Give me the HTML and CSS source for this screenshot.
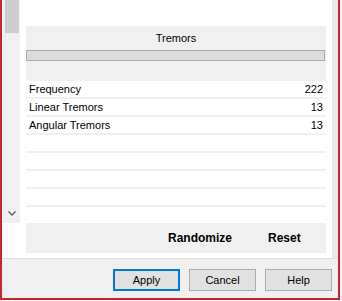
FILE: index.html
```html
<!DOCTYPE html>
<html lang="en">
<head>
  <meta charset="UTF-8">
  <title>Tremors</title>
  <link rel="stylesheet" href="styles.css">
</head>
<body>
  <div class="window">
    <div class="content">
      <div class="scrollbar">
        <div class="track">
          <div class="thumb"></div>
          <svg class="arrow" width="8" height="5" viewBox="0 0 8 5"><polyline points="0.5,0.5 4,4 7.5,0.5" fill="none" stroke="#606060" stroke-width="1.4"/></svg>
        </div>
      </div>
      <div class="pane">
        <div class="panel">
          <div class="panel-head">
            <div class="title">Tremors</div>
            <div class="meter"></div>
          </div>
          <div class="rows">
            <div class="row"><span>Frequency</span><span>222</span></div>
            <div class="row"><span>Linear Tremors</span><span>13</span></div>
            <div class="row"><span>Angular Tremors</span><span>13</span></div>
            <div class="row"></div>
            <div class="row"></div>
            <div class="row"></div>
            <div class="row"></div>
            <div class="row"></div>
          </div>
          <div class="actions">
            <span>Randomize</span>
            <span>Reset</span>
          </div>
        </div>
      </div>
      <div class="edge"></div>
    </div>
    <div class="footer">
      <button class="btn default">Apply</button>
      <button class="btn">Cancel</button>
      <button class="btn">Help</button>
    </div>
  </div>
</body>
</html>
```

FILE: styles.css
```css
:root {
  --frame-red: #c3282f;
  --face: #f0f0f0;
  --text: #000;
}
body {
  margin: 0;
  background: #f4f4f4;
  font-family: "Liberation Sans", Arial, sans-serif;
  color: var(--text);
}
.window {
  width: 340px;
  height: 300px;
  box-sizing: border-box;
  border: 2px solid var(--frame-red);
  border-top: none;
  background: var(--face);
  display: flex;
  flex-direction: column;
}
.content { display: flex; height: 258px; background: #fff; }

/* left scrollbar */
.scrollbar { width: 18px; border-left: 1px solid #fff; box-sizing: border-box; }
.track {
  height: 223px;
  background: var(--face);
  display: flex;
  flex-direction: column;
  align-items: center;
}
.thumb { width: 14px; height: 33px; background: #cdcdcd; }
.arrow { margin-top: auto; margin-bottom: 7px; }

.pane { width: 312px; padding: 26px 0 0 6px; box-sizing: border-box; }
.edge { width: 6px; background: #e9e9e9; }

.panel { width: 300px; }
.panel-head {
  height: 53px;
  box-sizing: border-box;
  background: var(--face);
  padding-top: 6px;
}
.title { font-size: 11px; line-height: 12px; text-align: center; }
.meter {
  margin-top: 6px;
  height: 11px;
  width: 299px;
  box-sizing: border-box;
  border: 1px solid #a9a9a9;
  background: #dcdcdc;
}
.row {
  height: 18px;
  box-sizing: border-box;
  border-top: 2px solid var(--face);
  display: flex;
  justify-content: space-between;
  padding: 0 3px 0 3px;
  font-size: 11px;
  line-height: 16px;
}
.actions {
  height: 30px;
  background: var(--face);
  display: flex;
  gap: 36px;
  padding-left: 142px;
  font-size: 12px;
  font-weight: bold;
  line-height: 31px;
}

.footer {
  flex: 1;
  border-top: 1px solid #dfdfdf;
  display: flex;
  justify-content: flex-end;
  align-items: flex-start;
  gap: 9px;
  padding: 10px 6px 0 0;
}
.btn {
  width: 67px;
  height: 22px;
  margin: 0;
  padding: 0;
  background: #e1e1e1;
  border: 1px solid #adadad;
  font-family: "Liberation Sans", Arial, sans-serif;
  font-size: 11px;
  color: #000;
}
.btn.default { border-color: #0078d7; box-shadow: inset 0 0 0 1px #0078d7; }
```
